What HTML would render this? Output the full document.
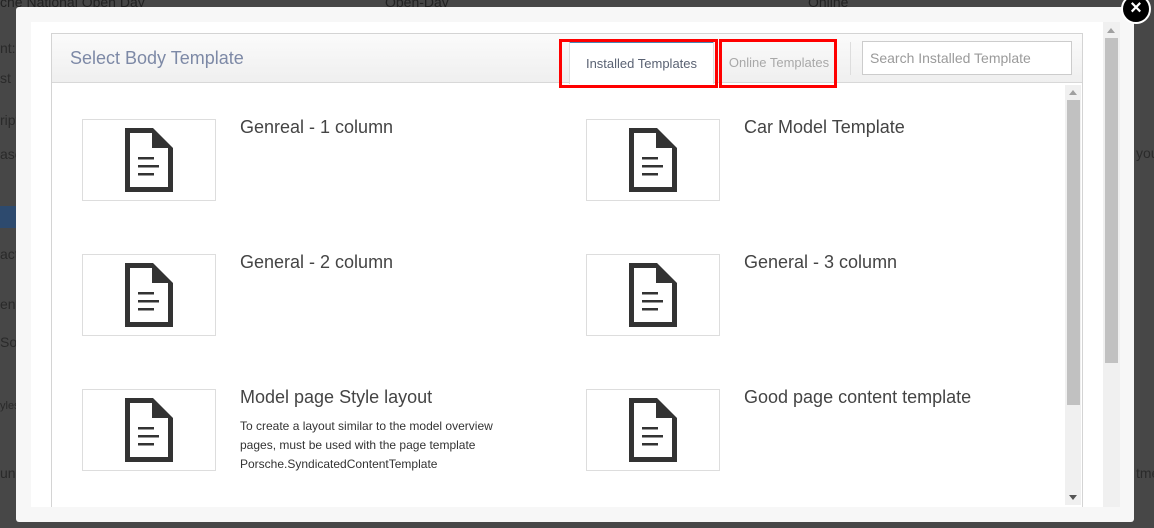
<!DOCTYPE html>
<html><head><meta charset="utf-8"><style>
*{margin:0;padding:0;box-sizing:border-box}
body{width:1154px;height:528px;overflow:hidden;background:#474747;font-family:"Liberation Sans",sans-serif;position:relative}
.bg{position:absolute;color:#2a2a2a;font-size:14px}
.modal{position:absolute;left:16px;top:7px;width:1118px;height:515px;background:#f7f7f7;border-radius:3px}
.inner{position:absolute;left:31px;top:22px;width:1089px;height:485px;background:#fff;overflow:hidden}
.panel{position:absolute;left:51px;top:33px;width:1032px;height:474px;border:1px solid #d4d4d4;border-bottom:none;background:#fff}
.hdr{position:absolute;left:0;top:0;width:1030px;height:49px;background:linear-gradient(#fbfbfb,#efefef);border-bottom:1px solid #d8d8d8}
.title{position:absolute;left:18px;top:14px;font-size:18px;color:#7d89a6}
.tab1{position:absolute;left:517px;top:7px;width:145px;height:43px;background:#fff;border:1px solid #ddd;border-top:2px solid #4b86b4;border-bottom:none;font-size:13px;color:#5a6273;text-align:center;line-height:42px}
.tab2{position:absolute;left:670px;top:7px;width:114px;height:42px;font-size:13px;color:#a8a8a8;text-align:center;line-height:44px}
.red{position:absolute;border:3px solid #f00}
.sep{position:absolute;left:798px;top:8px;width:1px;height:33px;background:#ddd}
.search{position:absolute;left:810px;top:7px;width:210px;height:34px;border:1px solid #ccc;background:#fff;font-size:14px;color:#9a9a9a;padding:8px 0 0 7px}
.thumb{position:absolute;width:134px;height:82px;border:1px solid #ddd;background:#fff}
.thumb svg{position:absolute;left:42px;top:8px}
.name{position:absolute;font-size:18px;color:#444}
.desc{position:absolute;font-size:12px;color:#333;line-height:19px;width:292px}
.sb1{position:absolute;left:1103px;top:22px;width:17px;height:485px;background:#f0f0f0}
.sb2{position:absolute;left:1065px;top:85px;width:16px;height:420px;background:#f0f0f0}
.close{position:absolute;left:1121px;top:-6px;width:30px;height:30px;border-radius:50%;background:#000;border:2px solid #fff;color:#fff;font-size:20px;font-weight:bold;text-align:center;line-height:24px}
</style></head><body>
<div class="bg" style="left:0;top:-6px;color:#222">che National Open Day</div>
<div class="bg" style="left:385px;top:-6px;color:#222">Open-Day</div>
<div class="bg" style="left:808px;top:-6px;color:#222">Online</div>
<div class="bg" style="left:0;top:40px">nt:</div>
<div class="bg" style="left:0;top:70px">st</div>
<div class="bg" style="left:0;top:112px">ript</div>
<div class="bg" style="left:0;top:146px">ase</div>
<div style="position:absolute;left:0;top:206px;width:16px;height:22px;background:#2d4a6e"></div>
<div class="bg" style="left:0;top:246px">act</div>
<div class="bg" style="left:0;top:296px">ent</div>
<div class="bg" style="left:0;top:334px">So</div>
<div class="bg" style="left:0;top:400px;font-size:11px">yles</div>
<div class="bg" style="left:0;top:465px">un</div>
<div class="bg" style="left:1136px;top:145px">you</div>
<div class="bg" style="left:1136px;top:465px">tme</div>
<div class="modal"></div>
<div class="inner"></div>
<div class="panel">
 <div class="hdr">
  <div class="title">Select Body Template</div>
  <div class="tab1">Installed Templates</div>
  <div class="tab2">Online Templates</div>
  <div class="sep"></div>
  <div class="search">Search Installed Template</div>
 </div>
</div>
<div class="red" style="left:559px;top:39px;width:159px;height:49px"></div>
<div class="red" style="left:719px;top:39px;width:118px;height:49px"></div>
<div class="sb1"><div style="position:absolute;left:2px;top:16px;width:13px;height:325px;background:#c1c1c1"></div><div style="position:absolute;left:4px;top:6px;border:4px solid transparent;border-bottom:5px solid #a0a0a0;border-top:none"></div></div>
<div class="sb2"><div style="position:absolute;left:2px;top:15px;width:13px;height:305px;background:#c1c1c1"></div><div style="position:absolute;left:4px;top:5px;border:4px solid transparent;border-bottom:5px solid #a0a0a0;border-top:none"></div><div style="position:absolute;left:4px;top:410px;border:4px solid transparent;border-top:5px solid #555;border-bottom:none"></div></div>

<svg width="0" height="0" style="position:absolute"><defs><g id="doc"><path d="M0 0H28L48 20V64H0Z" fill="#333"/><path d="M5 5H27V20H43V59H5Z" fill="#fff"/><rect x="13" y="29" width="16" height="2.5" fill="#333"/><rect x="13" y="37" width="21" height="2.5" fill="#333"/><rect x="13" y="45" width="16" height="2.5" fill="#333"/></g></defs></svg>

<div class="thumb" style="left:82px;top:119px"><svg width="48" height="64"><use href="#doc"/></svg></div>
<div class="name" style="left:240px;top:117px">Genreal - 1 column</div>
<div class="thumb" style="left:586px;top:119px"><svg width="48" height="64"><use href="#doc"/></svg></div>
<div class="name" style="left:744px;top:117px">Car Model Template</div>
<div class="thumb" style="left:82px;top:254px"><svg width="48" height="64"><use href="#doc"/></svg></div>
<div class="name" style="left:240px;top:252px">General - 2 column</div>
<div class="thumb" style="left:586px;top:254px"><svg width="48" height="64"><use href="#doc"/></svg></div>
<div class="name" style="left:744px;top:252px">General - 3 column</div>
<div class="thumb" style="left:82px;top:389px"><svg width="48" height="64"><use href="#doc"/></svg></div>
<div class="name" style="left:240px;top:387px">Model page Style layout</div>
<div class="desc" style="left:240px;top:417px">To create a layout similar to the model overview pages, must be used with the page template Porsche.SyndicatedContentTemplate</div>
<div class="thumb" style="left:586px;top:389px"><svg width="48" height="64"><use href="#doc"/></svg></div>
<div class="name" style="left:744px;top:387px">Good page content template</div>
<div class="close">×</div>
</body></html>
